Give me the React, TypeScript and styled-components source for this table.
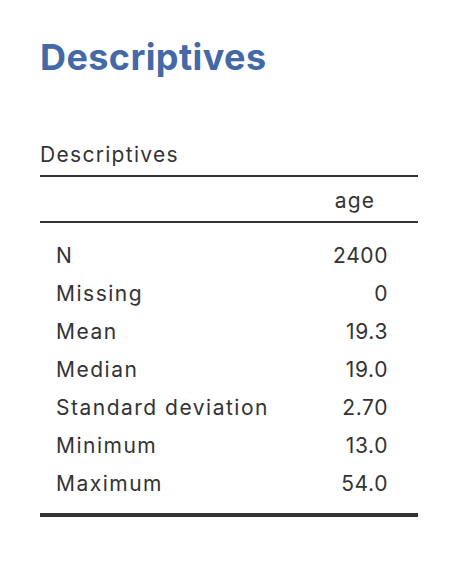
import React from "react";
import styled, { createGlobalStyle } from "styled-components";

const Global = createGlobalStyle`
  html, body { margin: 0; padding: 0; background: #ffffff; }
  body { font-family: Inter, "Liberation Sans", Arial, sans-serif; color: #333333; }
`;

const Page = styled.div`
  padding: 35px 58px 0 40px;
  width: 378px;
`;

const Heading = styled.h1`
  margin: 0;
  font-size: 36px;
  line-height: 44px;
  font-weight: 700;
  color: #4369a7;
  letter-spacing: 0.4px;
`;

const Caption = styled.div`
  margin-top: 64px;
  font-size: 21px;
  line-height: 24px;
  letter-spacing: 1.3px;
  color: #333333;
`;

const Table = styled.table`
  margin-top: 8px;
  width: 378px;
  border-collapse: collapse;
  font-size: 21px;
  color: #333333;
`;

const HeadRow = styled.tr`
  border-top: 2px solid #333333;
  border-bottom: 2px solid #333333;
`;

const HeadCell = styled.th<{ $align?: "left" | "right" }>`
  font-weight: 400;
  text-align: ${(p) => p.$align ?? "right"};
  padding: 5px 43px 1px 0;
  line-height: 38px;
  letter-spacing: 1.1px;
`;

const Body = styled.tbody`
  border-bottom: 4px solid #333333;
`;

const Row = styled.tr<{ $first?: boolean; $last?: boolean }>`
  td {
    padding-top: ${(p) => (p.$first ? "14px" : "0")};
    padding-bottom: ${(p) => (p.$last ? "10px" : "0")};
  }
`;

const Label = styled.td`
  text-align: left;
  padding-left: 16px;
  line-height: 38px;
  letter-spacing: 1.5px;
  white-space: nowrap;
`;

const Value = styled.td`
  text-align: right;
  padding-right: 30px;
  line-height: 38px;
  letter-spacing: 0.6px;
`;

const rows: [string, string][] = [
  ["N", "2400"],
  ["Missing", "0"],
  ["Mean", "19.3"],
  ["Median", "19.0"],
  ["Standard deviation", "2.70"],
  ["Minimum", "13.0"],
  ["Maximum", "54.0"],
];

export default function App() {
  return (
    <>
      <Global />
      <Page>
        <Heading>Descriptives</Heading>
        <Caption>Descriptives</Caption>
        <Table>
          <thead>
            <HeadRow>
              <HeadCell $align="left"></HeadCell>
              <HeadCell>age</HeadCell>
            </HeadRow>
          </thead>
          <Body>
            {rows.map(([l, v], i) => (
              <Row key={l} $first={i === 0} $last={i === rows.length - 1}>
                <Label>{l}</Label>
                <Value>{v}</Value>
              </Row>
            ))}
          </Body>
        </Table>
      </Page>
    </>
  );
}
